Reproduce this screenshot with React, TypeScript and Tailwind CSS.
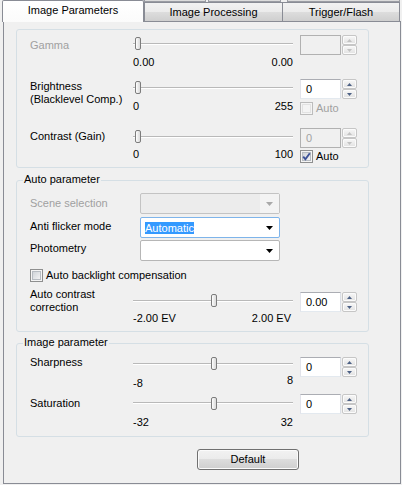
import React from "react";

function Tri({ up, color, w = 5, h = 3 }: { up?: boolean; color: string; w?: number; h?: number }) {
  return (
    <svg width={w} height={h} viewBox={`0 0 ${w} ${h}`} className="block">
      <polygon points={up ? `0,${h} ${w / 2},0 ${w},${h}` : `0,0 ${w},0 ${w / 2},${h}`} fill={color} />
    </svg>
  );
}

function SpinBtn({ up, disabled }: { up?: boolean; disabled?: boolean }) {
  return (
    <div className="w-[15px] h-[10px] flex items-center justify-center border border-[#c6c6c6] rounded-[2px] bg-[linear-gradient(#f8f8f8,#ececec_50%,#e2e2e2)] shadow-[inset_0_0_0_1px_#fbfbfb]">
      <Tri up={up} color={disabled ? "#c2c2c2" : "#4d6185"} />
    </div>
  );
}

function Spin({ value, disabled }: { value: string; disabled?: boolean }) {
  return (
    <div className="flex gap-[1px]">
      <div
        className={
          disabled
            ? "w-[41px] h-[20px] border border-[#b1b1b1] bg-[#f0f0f0] text-[#a3a3a3] pl-[5px] leading-[18px]"
            : "w-[41px] h-[20px] border border-[#abadb3] border-l-[#e2e3ea] border-r-[#dbdfe6] border-b-[#e3e9ef] bg-white pl-[5px] leading-[18px]"
        }
      >
        {value}
      </div>
      <div className="flex flex-col">
        <SpinBtn up disabled={disabled} />
        <SpinBtn disabled={disabled} />
      </div>
    </div>
  );
}

function Check({ checked, disabled }: { checked?: boolean; disabled?: boolean }) {
  return (
    <div className={`w-[13px] h-[13px] border ${disabled ? "border-[#bcbcbc]" : "border-[#8e8f8f]"} p-[1px] bg-[#f4f4f4]`}>
      <div
        className={`relative w-full h-full ${
          disabled ? "bg-[#f4f4f4] border border-[#e2e2e2]" : "bg-[linear-gradient(135deg,#d0d4d9,#f2f2f3)] border border-[#b7bcc2]"
        }`}
      >
        {checked && (
          <svg className="absolute left-[-1px] top-[-1px]" width="9" height="9" viewBox="0 0 9 9">
            <path d="M1.2 4.6 L3.4 7.2 L7.8 1.3" stroke="#3d5297" strokeWidth="1.9" fill="none" />
          </svg>
        )}
      </div>
    </div>
  );
}

function Slider({ pos, thumbTop, trackTop, h }: { pos: number; thumbTop: string; trackTop: string; h: string }) {
  return (
    <div className={`relative w-[160px] ${h}`}>
      <div className={`absolute left-0 right-0 h-[2px] border-t border-[#b9b9b9] bg-white ${trackTop}`} />
      <div
        className={`absolute w-[6px] h-[13px] ${thumbTop} border border-[#7c7c7c] rounded-[2px] bg-[linear-gradient(90deg,#ffffff,#e6e6e6_60%,#dcdcdc)]`}
        style={{ left: 2 + pos * 152 }}
      />
    </div>
  );
}

type RowProps = {
  label: React.ReactNode;
  labelCls: string;
  labelDisabled?: boolean;
  pos: number;
  thumbTop: string;
  trackTop: string;
  sliderH: string;
  min: string;
  max: string;
  maxCls?: string;
  spin: string;
  spinDisabled?: boolean;
  check?: React.ReactNode;
  heightCls: string;
};

function SliderRow(p: RowProps) {
  return (
    <div className={`flex ${p.heightCls}`}>
      <div className={`w-[103px] ${p.labelCls} ${p.labelDisabled ? "text-[#a0a0a0]" : ""}`}>{p.label}</div>
      <div className="w-[160px] flex flex-col">
        <Slider pos={p.pos} thumbTop={p.thumbTop} trackTop={p.trackTop} h={p.sliderH} />
        <div className="flex justify-between">
          <span>{p.min}</span>
          <span className={p.maxCls}>{p.max}</span>
        </div>
      </div>
      <div className="ml-[7px] flex flex-col">
        <Spin value={p.spin} disabled={p.spinDisabled} />
        {p.check}
      </div>
    </div>
  );
}

function Combo({ disabled, focused, selected }: { disabled?: boolean; focused?: boolean; selected?: string }) {
  const cls = disabled
    ? "border-[#c3c3c3] bg-[#ececec]"
    : focused
    ? "border-[#7eb4ea] bg-white"
    : "border-[#b6b6b6] bg-white";
  return (
    <div className={`w-[140px] h-[21px] border rounded-[2px] flex items-stretch ${cls}`}>
      <div className="flex-1 pl-[4px] flex items-center">
        {selected && <span className="bg-[#3399ff] text-white leading-[12px] h-[12px]">{selected}</span>}
      </div>
      <div className={`w-[19px] flex items-center justify-center ${disabled ? "bg-[#f3f3f3]" : ""}`}>
        <Tri w={7} h={4} color={disabled ? "#a9a9a9" : "#000000"} />
      </div>
    </div>
  );
}

function Legend({ children }: { children: React.ReactNode }) {
  return <div className="absolute left-[6px] top-[-8px] px-[1px] bg-[#f0f0f0] leading-[13px]">{children}</div>;
}

export default function App() {
  return (
    <div className="w-[402px] h-[485px] bg-[#f0f0f0] text-[11px] leading-[13px] text-black font-['Liberation_Sans',Arial,sans-serif] overflow-hidden">
      {/* Tabs */}
      <div className="flex h-[21px] pl-[2px] items-start">
        <div className="relative z-10 w-[142px] h-[22px] border border-b-0 border-[#898c95] rounded-t-[2px] bg-[linear-gradient(#ffffff,#fbfbfb)] text-center leading-[19px]">
          Image Parameters
        </div>
        <div className="flex flex-col">
          <div className="flex h-[2px]">
            <div className="w-[62px] h-[2px] border-x border-b border-[#9a9ca3] bg-[#dcdcdc]" />
            <div className="w-[2px]" />
            <div className="w-[73px] h-[2px] border-x border-b border-[#9a9ca3] bg-[#dcdcdc]" />
            <div className="w-[6px]" />
            <div className="w-[113px] h-[2px] border-x border-b border-[#9a9ca3] bg-[#dcdcdc]" />
          </div>
          <div className="flex">
            <div className="w-[139px] h-[19px] border border-b-0 border-[#898c95] bg-[linear-gradient(#f2f2f2,#ebebeb_50%,#dddddd_50%,#cfcfcf)] text-center leading-[19px]">
              Image Processing
            </div>
            <div className="w-[117px] h-[19px] border border-b-0 border-l-0 border-[#898c95] bg-[linear-gradient(#f2f2f2,#ebebeb_50%,#dddddd_50%,#cfcfcf)] text-center leading-[19px]">
              Trigger/Flash
            </div>
          </div>
        </div>
      </div>

      {/* Panel */}
      <div className="ml-[3px] w-[398px] h-[463px] border border-[#898c95] bg-[#f0f0f0] pt-[7px] pl-[12px]">
        {/* Group 1 */}
        <div className="w-[353px] h-[139px] border border-[#d5dfe5] rounded-[3px] pt-[5px] pl-[13px]">
          <SliderRow
            label="Gamma"
            labelCls="pt-[4px]"
            labelDisabled
            pos={0}
            thumbTop="top-[2px]"
            trackTop="top-[8px]"
            sliderH="h-[21px]"
            min="0.00"
            max="0.00"
            spin=""
            spinDisabled
            heightCls="h-[44px]"
          />
          <SliderRow
            label={
              <>
                Brightness
                <br />
                (Blacklevel Comp.)
              </>
            }
            labelCls="pt-[1px]"
            pos={0}
            thumbTop="top-[2px]"
            trackTop="top-[8px]"
            sliderH="h-[21px]"
            min="0"
            max="255"
            spin="0"
            check={
              <div className="flex items-center mt-[3px] text-[#a0a0a0]">
                <Check disabled />
                <span className="ml-[3px]">Auto</span>
              </div>
            }
            heightCls="h-[49px]"
          />
          <SliderRow
            label="Contrast (Gain)"
            labelCls="pt-[2px]"
            pos={0}
            thumbTop="top-[2px]"
            trackTop="top-[8px]"
            sliderH="h-[20px]"
            min="0"
            max="100"
            spin="0"
            spinDisabled
            check={
              <div className="flex items-center mt-[2px]">
                <Check checked />
                <span className="ml-[3px]">Auto</span>
              </div>
            }
            heightCls="h-[38px]"
          />
        </div>

        {/* Group 2 */}
        <div className="relative mt-[12px] w-[353px] h-[152px] border border-[#d5dfe5] rounded-[3px] pt-[12px] pl-[13px]">
          <Legend>Auto parameter</Legend>
          <div className="flex h-[24px]">
            <div className="w-[110px] leading-[21px] text-[#a0a0a0]">Scene selection</div>
            <Combo disabled />
          </div>
          <div className="flex h-[23px]">
            <div className="w-[110px] leading-[19px]">Anti flicker mode</div>
            <Combo focused selected="Automatic" />
          </div>
          <div className="flex h-[29px]">
            <div className="w-[110px] leading-[17px]">Photometry</div>
            <Combo />
          </div>
          <div className="flex items-start h-[23px]">
            <Check />
            <span className="ml-[3px] leading-[13px]">Auto backlight compensation</span>
          </div>
          <SliderRow
            label={
              <>
                Auto contrast
                <br />
                correction
              </>
            }
            labelCls="-mt-[4px]"
            pos={0.5}
            thumbTop="top-[2px]"
            trackTop="top-[8px]"
            sliderH="h-[20px]"
            min="-2.00 EV"
            max="2.00 EV"
            maxCls="mr-[2px]"
            spin="0.00"
            heightCls="h-[38px]"
          />
        </div>

        {/* Group 3 */}
        <div className="relative mt-[11px] w-[353px] h-[94px] border border-[#d5dfe5] rounded-[3px] pt-[13px] pl-[13px]">
          <Legend>Image parameter</Legend>
          <SliderRow
            label="Sharpness"
            labelCls="-mt-[1px]"
            pos={0.5}
            thumbTop="top-[0px]"
            trackTop="top-[6px]"
            sliderH="h-[20px]"
            min="-8"
            max="8"
            maxCls="-mt-[3px]"
            spin="0"
            heightCls="h-[37px]"
          />
          <SliderRow
            label="Saturation"
            labelCls="pt-[3px]"
            pos={0.5}
            thumbTop="top-[3px]"
            trackTop="top-[8px]"
            sliderH="h-[22px]"
            min="-32"
            max="32"
            spin="0"
            heightCls="h-[40px]"
          />
        </div>

        {/* Default button */}
        <div className="mt-[12px] ml-[181px]">
          <div className="w-[102px] h-[21px] border border-[#707070] rounded-[3px] bg-[linear-gradient(#f2f2f2,#ebebeb_50%,#dddddd_50%,#cfcfcf)] shadow-[inset_0_0_0_1px_#fbfbfb] flex items-center justify-center">
            Default
          </div>
        </div>
      </div>
    </div>
  );
}
